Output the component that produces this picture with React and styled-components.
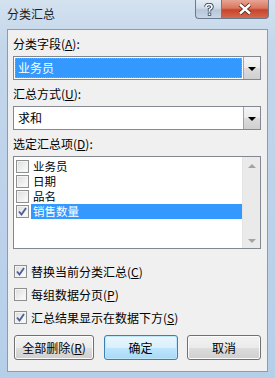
import React from 'react';
import styled, { createGlobalStyle } from 'styled-components';

const Global = createGlobalStyle`
  html, body { margin: 0; padding: 0; background: #c9dcf0; }
  body { font-family: "Noto Sans CJK SC", "Noto Sans", sans-serif; font-size: 12px; }
`;

const Window = styled.div`
  width: 275px;
  height: 378px;
  box-sizing: border-box;
  padding: 0 7px 6px 7px;
  display: flex;
  flex-direction: column;
  background: linear-gradient(180deg, #d4e2f0 0%, #c3d6ea 12%, #bcd2ea 60%, #b6cfe9 100%);
  overflow: hidden;
`;

const TitleBar = styled.div`
  height: 29px;
  display: flex;
  align-items: flex-start;
  justify-content: space-between;
`;

const Title = styled.div`
  margin-top: 6px;
  color: #1e1e1e;
  font-size: 12px;
  line-height: 16px;
`;

const Caption = styled.div`
  display: flex;
  margin-right: -1px;
`;

const CapBtn = styled.div`
  width: ${p => p.$w}px;
  height: 19px;
  box-sizing: border-box;
  border: 1px solid #6b7b8f;
  border-top: none;
  border-left-width: ${p => (p.$close ? 0 : 1)}px;
  border-radius: ${p => (p.$close ? '0 0 4px 0' : '0 0 0 4px')};
  background: ${p => p.$close
    ? 'linear-gradient(180deg, #e8a493 0%, #d9775f 45%, #c7442a 55%, #d66a4e 100%)'
    : 'linear-gradient(180deg, #e4ecf5 0%, #cfdbe8 45%, #b7c6d8 55%, #c9d6e6 100%)'};
  display: flex;
  align-items: center;
  justify-content: center;
`;

const Check = () => (
  <svg width="9" height="9" viewBox="0 0 9 9">
    <path d="M1 4.5 L3.5 7.5 L8 1" fill="none" stroke="#4a5f97" strokeWidth="1.8" />
  </svg>
);

const HelpIcon = () => (
  <svg width="10" height="13" viewBox="0 0 10 13">
    <path d="M2 4 Q2 1.5 5 1.5 Q8 1.5 8 4 Q8 5.5 5.5 6.5 L5.5 8.5" fill="none" stroke="#3b4a5e" strokeWidth="3.4" />
    <path d="M2 4 Q2 1.5 5 1.5 Q8 1.5 8 4 Q8 5.5 5.5 6.5 L5.5 8.5" fill="none" stroke="#fff" strokeWidth="1.6" />
    <rect x="3.8" y="9.6" width="3.4" height="3.2" fill="#3b4a5e" />
    <rect x="4.6" y="10.4" width="1.8" height="1.6" fill="#fff" />
  </svg>
);

const CloseIcon = () => (
  <svg width="14" height="12" viewBox="0 0 14 12">
    <path d="M2 1.5 L12 10.5 M12 1.5 L2 10.5" stroke="#5a2318" strokeWidth="4.2" />
    <path d="M2 1.5 L12 10.5 M12 1.5 L2 10.5" stroke="#fff" strokeWidth="2.4" />
  </svg>
);

const Client = styled.div`
  flex: 1;
  background: #f0f0f0;
  border: 1px solid #8b9cb0;
  box-sizing: border-box;
  padding: 7px 6px 0 5px;
  display: flex;
  flex-direction: column;
`;

const Label = styled.div`
  color: #000;
  height: 14px;
  line-height: 14px;
  margin-bottom: 5px;
`;

const Combo = styled.div`
  height: 24px;
  box-sizing: border-box;
  border: 1px solid #828790;
  background: #fff;
  display: flex;
  margin-bottom: 7px;
`;

const ComboText = styled.div`
  flex: 1;
  margin: 1px;
  padding-left: 2px;
  line-height: 18px;
  background: ${p => (p.$sel ? '#3399ff' : '#fff')};
  color: ${p => (p.$sel ? '#fff' : '#000')};
  border: 1px ${p => (p.$sel ? 'dotted #e0913c' : 'solid transparent')};
`;

const DropBtn = styled.div`
  width: 17px;
  box-sizing: border-box;
  border-left: 1px solid #a0a4ab;
  background: linear-gradient(180deg, #f4f4f4 0%, #ebebeb 50%, #dcdcdc 51%, #cfcfcf 100%);
  display: flex;
  align-items: center;
  justify-content: center;
  &::after {
    content: "";
    border-left: 4px solid transparent;
    border-right: 4px solid transparent;
    border-top: 4px solid #000;
    margin-top: 1px;
  }
`;

const ListBox = styled.div`
  height: 93px;
  box-sizing: border-box;
  border: 1px solid #828790;
  background: #fff;
  display: flex;
  margin-bottom: 14px;
`;

const Items = styled.div`
  flex: 1;
  padding: 2px 0 0 2px;
  display: flex;
  flex-direction: column;
`;

const Item = styled.div`
  height: 15px;
  display: flex;
  align-items: center;
  gap: 2px;
`;

const ItemText = styled.span`
  flex: 1;
  height: 15px;
  line-height: 15px;
  font-size: 11.5px;
  padding-left: 2px;
  background: ${p => (p.$sel ? '#3399ff' : 'transparent')};
  color: ${p => (p.$sel ? '#fff' : '#000')};
`;

const ScrollBar = styled.div`
  width: 17px;
  background: #eaeaea;
  border-left: 1px solid #e4e4e4;
  display: flex;
  flex-direction: column;
  justify-content: space-between;
  align-items: center;
  padding: 7px 0 5px;
`;

const Arrow = styled.div`
  border-left: 4px solid transparent;
  border-right: 4px solid transparent;
  ${p => (p.$up ? 'border-bottom: 4px solid #a3a3a3;' : 'border-top: 4px solid #a3a3a3;')}
`;

const Box = styled.span`
  width: 13px;
  height: 13px;
  flex: none;
  box-sizing: border-box;
  border: 1px solid #8e8f8f;
  background: linear-gradient(135deg, #dcdcdc 0%, #f4f4f4 70%, #fff 100%);
  box-shadow: inset 0 0 0 1px #f4f4f4;
  display: flex;
  align-items: center;
  justify-content: center;
`;

const CheckRow = styled.div`
  display: flex;
  align-items: center;
  gap: 4px;
  height: 16px;
  margin-bottom: 7px;
  padding-left: 1px;
`;

const Buttons = styled.div`
  margin-top: 3px;
  display: flex;
  justify-content: space-between;
  padding-left: 1px;
`;

const Button = styled.div`
  width: ${p => p.$w}px;
  height: 25px;
  box-sizing: border-box;
  border: 1px solid ${p => (p.$def ? '#3c7fb1' : '#707070')};
  border-radius: 3px;
  background: ${p => p.$def
    ? 'linear-gradient(180deg, #eaf6fd 0%, #d9f0fc 50%, #bee6fd 51%, #a7d9f5 100%)'
    : 'linear-gradient(180deg, #f2f2f2 0%, #ebebeb 50%, #dddddd 51%, #cfcfcf 100%)'};
  box-shadow: inset 0 0 0 1px ${p => (p.$def ? '#c0e6fc' : '#fcfcfc')};
  display: flex;
  align-items: center;
  justify-content: center;
  color: #000;
`;

const CheckBox = ({ checked }) => <Box>{checked && <Check />}</Box>;

const items = [
  { t: '业务员' },
  { t: '日期' },
  { t: '品名' },
  { t: '销售数量', c: true },
];

export default function App() {
  return (
    <>
      <Global />
      <Window>
        <TitleBar>
          <Title>分类汇总</Title>
          <Caption>
            <CapBtn $w={27}><HelpIcon /></CapBtn>
            <CapBtn $w={47} $close><CloseIcon /></CapBtn>
          </Caption>
        </TitleBar>
        <Client>
          <Label>分类字段(<u>A</u>):</Label>
          <Combo>
            <ComboText $sel>业务员</ComboText>
            <DropBtn />
          </Combo>
          <Label>汇总方式(<u>U</u>):</Label>
          <Combo>
            <ComboText>求和</ComboText>
            <DropBtn />
          </Combo>
          <Label>选定汇总项(<u>D</u>):</Label>
          <ListBox>
            <Items>
              {items.map(it => (
                <Item key={it.t}>
                  <CheckBox checked={it.c} />
                  <ItemText $sel={it.c}>{it.t}</ItemText>
                </Item>
              ))}
            </Items>
            <ScrollBar>
              <Arrow $up />
              <Arrow />
            </ScrollBar>
          </ListBox>
          <CheckRow><CheckBox checked /><span>替换当前分类汇总(<u>C</u>)</span></CheckRow>
          <CheckRow><CheckBox /><span>每组数据分页(<u>P</u>)</span></CheckRow>
          <CheckRow><CheckBox checked /><span>汇总结果显示在数据下方(<u>S</u>)</span></CheckRow>
          <Buttons>
            <Button $w={80}>全部删除(<u>R</u>)</Button>
            <Button $w={74} $def>确定</Button>
            <Button $w={74}>取消</Button>
          </Buttons>
        </Client>
      </Window>
    </>
  );
}
